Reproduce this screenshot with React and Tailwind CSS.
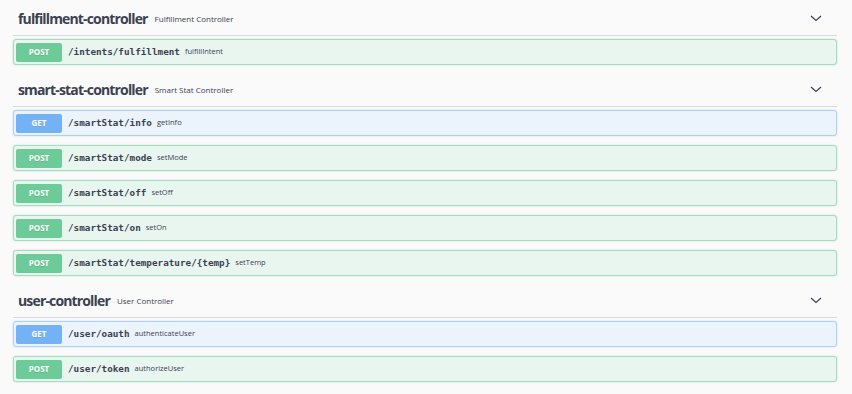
import React from "react";

const sections = [
  {
    name: "fulfillment-controller",
    desc: "Fulfillment Controller",
    ops: [{ m: "POST", path: "/intents/fulfillment", sum: "fulfillIntent" }],
  },
  {
    name: "smart-stat-controller",
    desc: "Smart Stat Controller",
    ops: [
      { m: "GET", path: "/smartStat/info", sum: "getInfo" },
      { m: "POST", path: "/smartStat/mode", sum: "setMode" },
      { m: "POST", path: "/smartStat/off", sum: "setOff" },
      { m: "POST", path: "/smartStat/on", sum: "setOn" },
      { m: "POST", path: "/smartStat/temperature/{temp}", sum: "setTemp" },
    ],
  },
  {
    name: "user-controller",
    desc: "User Controller",
    ops: [
      { m: "GET", path: "/user/oauth", sum: "authenticateUser" },
      { m: "POST", path: "/user/token", sum: "authorizeUser" },
    ],
  },
];

function Chevron() {
  return (
    <svg width="12" height="7" viewBox="0 0 12 7" className="mr-[15px]">
      <polyline points="1,1 6,5.5 11,1" fill="none" stroke="#3b4151" strokeWidth="1.2" />
    </svg>
  );
}

function Op({ op }) {
  const get = op.m === "GET";
  return (
    <div
      className={
        "flex h-[26px] items-center rounded-[3px] border px-[2px] shadow-[0_0_2px_rgba(0,0,0,0.15)] " +
        (get ? "border-[#a9d1fb] bg-[#ebf3fc]" : "border-[#9fdfc0] bg-[#e9f5ef]")
      }
    >
      <div
        className={
          "flex h-[19px] w-[46px] items-center justify-center rounded-[2px] text-[8px] font-bold text-white [text-shadow:0_1px_0_rgba(0,0,0,0.1)] " +
          (get ? "bg-[#74b2f6]" : "bg-[#6ccb98]")
        }
        style={{ fontFamily: "'Open Sans', sans-serif" }}
      >
        {op.m}
      </div>
      <span
        className="ml-[6px] text-[9.3px] font-bold text-[#3b4151]"
        style={{ fontFamily: "'DejaVu Sans Mono', monospace" }}
      >
        {op.path}
      </span>
      <span className="ml-[5px] text-[7.5px] text-[#3b4151]">{op.sum}</span>
    </div>
  );
}

export default function App() {
  return (
    <div
      className="min-h-[394px] w-[852px] bg-[#fafafa] pl-[13px] pr-[15px]"
      style={{ fontFamily: "'Open Sans', sans-serif" }}
    >
      {sections.map((s) => (
        <div key={s.name} className="pb-[6px]">
          <div className="flex h-[36px] items-center border-b border-[#d9dadc] pt-[2px]">
            <span className="ml-[5px] text-[14px] font-bold tracking-[-0.85px] text-[#3b4151]">{s.name}</span>
            <span className="ml-[7px] text-[8px] text-[#3b4151]">{s.desc}</span>
            <div className="flex-1" />
            <Chevron />
          </div>
          <div className="mt-[3px] flex flex-col gap-[9px]">
            {s.ops.map((op) => (
              <Op key={op.path + op.m} op={op} />
            ))}
          </div>
        </div>
      ))}
    </div>
  );
}
